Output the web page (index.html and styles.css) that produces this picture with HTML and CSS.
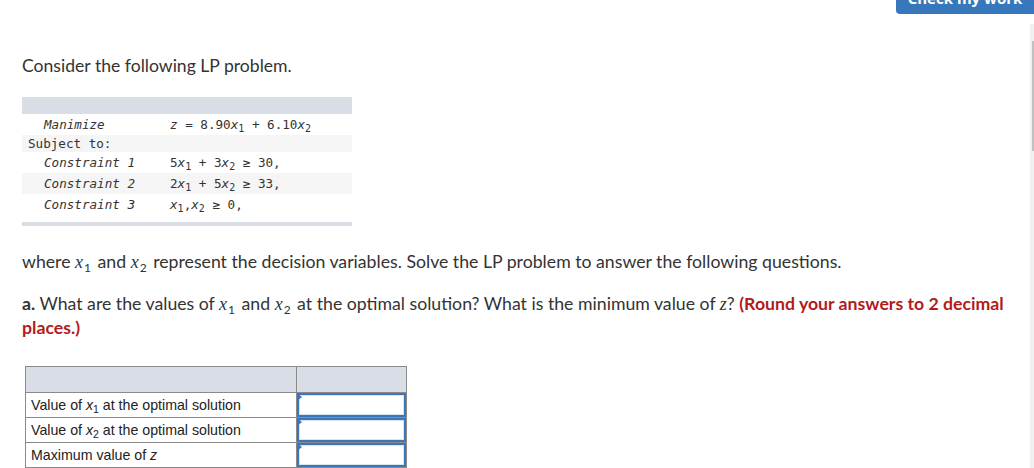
FILE: index.html
```html
<!DOCTYPE html>
<html>
<head>
<meta charset="utf-8">
<link rel="stylesheet" href="styles.css">
</head>
<body>
<div class="page">
  <div class="topbar">
    <button class="check-btn"><span class="btn-label">Check my work</span></button>
  </div>
  <div class="body-row">
    <main class="content">
      <p class="intro">Consider the following LP problem.</p>

      <table class="lp">
        <tr class="lp-head"><td colspan="2"></td></tr>
        <tr class="lp-row"><td class="lbl"><i>Manimize</i></td><td class="eq"><i>z</i> = 8.90<i>x</i><sub>1</sub> + 6.10<i>x</i><sub>2</sub></td></tr>
        <tr class="lp-row short alt"><td class="lbl subj">Subject to:</td><td class="eq"></td></tr>
        <tr class="lp-row"><td class="lbl"><i>Constraint 1</i></td><td class="eq">5<i>x</i><sub>1</sub> + 3<i>x</i><sub>2</sub> ≥ 30,</td></tr>
        <tr class="lp-row alt"><td class="lbl"><i>Constraint 2</i></td><td class="eq">2<i>x</i><sub>1</sub> + 5<i>x</i><sub>2</sub> ≥ 33,</td></tr>
        <tr class="lp-row"><td class="lbl"><i>Constraint 3</i></td><td class="eq"><i>x</i><sub>1</sub>,<i>x</i><sub>2</sub> ≥ 0,</td></tr>
        <tr class="lp-gap"><td colspan="2"></td></tr>
        <tr class="lp-foot"><td colspan="2"></td></tr>
      </table>

      <p class="text where">where <i class="var">x</i><sub>1</sub> and <i class="var">x</i><sub>2</sub> represent the decision variables. Solve the LP problem to answer the following questions.</p>

      <p class="text question"><b>a.</b> What are the values of <i class="var">x</i><sub>1</sub> and <i class="var">x</i><sub>2</sub> at the optimal solution? What is the minimum value of <i class="var">z</i>? <span class="hint">(Round your answers to 2 decimal places.)</span></p>

      <table class="answers">
        <tr class="ans-head"><th></th><th></th></tr>
        <tr><td class="q">Value of <i>x</i><sub>1</sub> at the optimal solution</td><td class="a"><div class="input"><span class="flag"></span></div></td></tr>
        <tr><td class="q">Value of <i>x</i><sub>2</sub> at the optimal solution</td><td class="a"><div class="input"><span class="flag"></span></div></td></tr>
        <tr><td class="q">Maximum value of <i>z</i></td><td class="a"><div class="input"><span class="flag"></span></div></td></tr>
      </table>
    </main>
    <div class="rail"><div class="thumb"></div></div>
  </div>
</div>
</body>
</html>
```

FILE: styles.css
```css
html, body {
  margin: 0;
  padding: 0;
  background: #fff;
  overflow: hidden;
}
.page {
  width: 1034px;
  height: 468px;
  display: flex;
  flex-direction: column;
  font-family: "Lato", "Open Sans", sans-serif;
  color: #333;
}
.topbar {
  display: flex;
  justify-content: flex-end;
  height: 14px;
}
.check-btn {
  width: 138px;
  height: 14px;
  margin: 0;
  padding: 0;
  border: none;
  border-radius: 0 0 0 4px;
  background: #3777bc;
  color: #fff;
  font-family: "Open Sans", sans-serif;
  font-weight: 700;
  font-size: 15px;
  overflow: hidden;
  display: flex;
  align-items: flex-start;
  justify-content: center;
}
.btn-label {
  display: block;
  line-height: 20px;
  margin-top: -12px;
  white-space: nowrap;
}
.body-row {
  flex: 1;
  display: flex;
  min-height: 0;
}
.content {
  flex: 1;
  padding-left: 22px;
  min-width: 0;
}
.rail {
  width: 4px;
  margin-top: 10px;
  background: #f0f0f0;
  padding-top: 17px;
}
.thumb {
  margin-left: 2px;
  width: 2px;
  height: 110px;
  background: #c1c1c1;
}
.intro {
  margin: 42px 0 0;
  font-size: 17.6px;
  line-height: 20px;
}
.lp {
  margin-top: 21px;
  width: 330px;
  border-collapse: collapse;
  font-family: "DejaVu Sans Mono", "Liberation Mono", monospace;
  font-size: 12.6px;
  color: #333;
}
.lp td {
  padding: 0;
  white-space: nowrap;
}
.lp-head td {
  height: 17px;
  background: #d9dde6;
}
.lp-row td {
  height: 21px;
  vertical-align: middle;
}
.lp-row.short td {
  height: 17px;
}
.lp-row.alt td {
  background: #f5f5f5;
}
.lp .lbl {
  width: 126px;
  padding-left: 22px;
}
.lp .lbl.subj {
  padding-left: 6px;
}
.lp .eq {
  padding-left: 0;
}
.lp sub {
  font-size: 10px;
  line-height: 0;
  vertical-align: -3px;
}
.lp-gap td {
  height: 7px;
}
.lp-foot td {
  height: 4px;
  background: #d9dde6;
}
.text {
  font-size: 17.7px;
  line-height: 24px;
  margin: 0;
}
.text sub {
  font-size: 12px;
  line-height: 0;
  vertical-align: -4px;
  margin-left: 1px;
  margin-right: 2px;
}
.text .var {
  font-family: "Liberation Serif", serif;
  font-size: 18px;
}
.where {
  margin-top: 24px;
}
.question {
  margin-top: 18px;
  width: 1000px;
}
.hint {
  color: #b31b1b;
  font-weight: 700;
}
.answers {
  margin: 26px 0 0 3px;
  border-collapse: collapse;
  font-family: "Liberation Sans", Arial, sans-serif;
  font-size: 14.2px;
  color: #222;
}
.answers th, .answers td {
  border: 1px solid #8a8a8a;
  padding: 0;
}
.answers th {
  height: 25px;
  background: #d9dde6;
}
.answers th:first-child, .answers .q {
  width: 265px;
}
.answers th:last-child, .answers .a {
  width: 109px;
}
.answers .q {
  height: 24px;
  padding-left: 5px;
  vertical-align: middle;
}
.answers .q sub {
  font-size: 10.5px;
  line-height: 0;
  vertical-align: -3px;
}
.answers .a {
  padding: 0;
}
.input {
  position: relative;
  height: 20px;
  margin: 0;
  border: 2px solid #3a76b8;
  box-shadow: inset 0 0 0 1px #d6e4f3;
  background: #fff;
}
.flag {
  position: absolute;
  left: -2px;
  top: -2px;
  width: 0;
  height: 0;
  border-top: 4px solid transparent;
  border-bottom: 4px solid transparent;
  border-left: 5px solid #3a76b8;
}
```
